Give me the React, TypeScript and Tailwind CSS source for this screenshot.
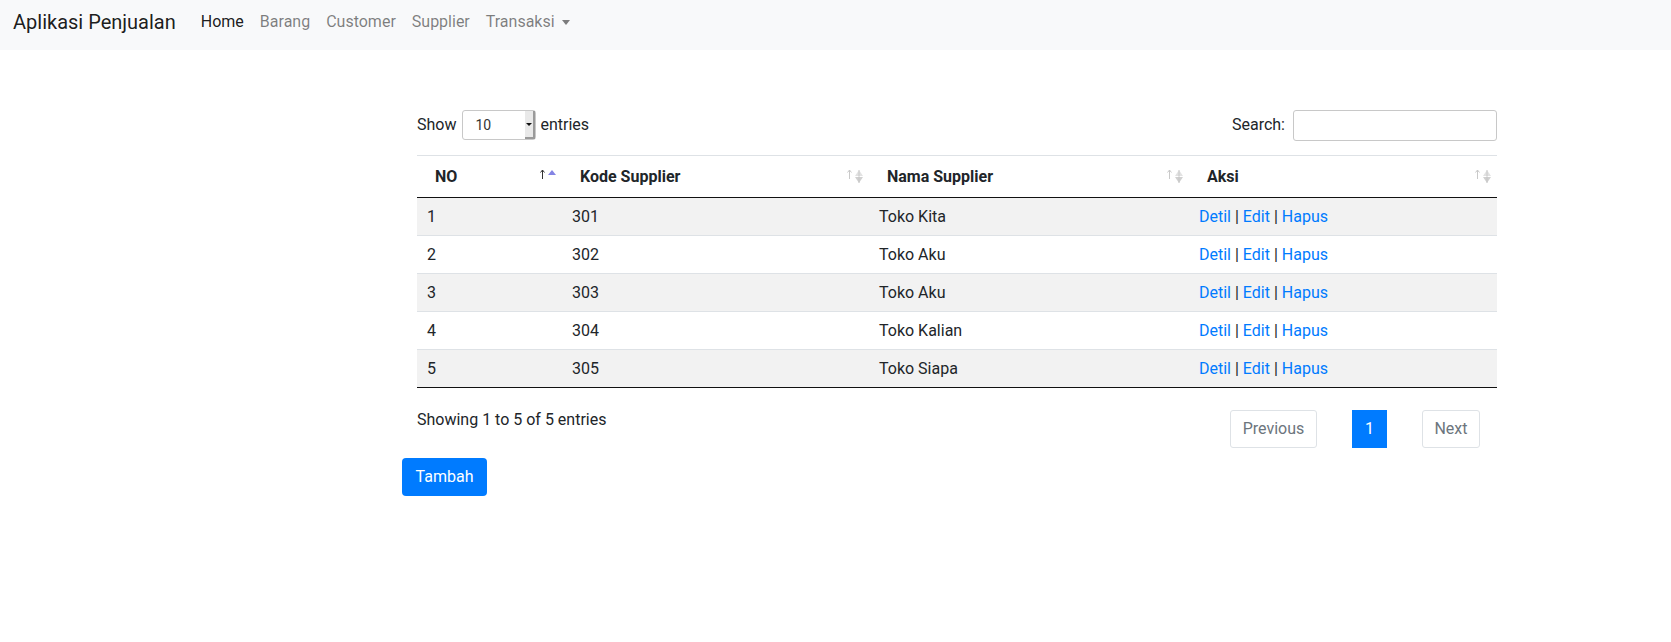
import React from 'react';

const suppliers = [
  { no: 1, kode: '301', nama: 'Toko Kita' },
  { no: 2, kode: '302', nama: 'Toko Aku' },
  { no: 3, kode: '303', nama: 'Toko Aku' },
  { no: 4, kode: '304', nama: 'Toko Kalian' },
  { no: 5, kode: '305', nama: 'Toko Siapa' },
];

function SortIcon({ active }: { active?: boolean }) {
  const arrow = active ? '#333333' : '#c9c9c9';
  return (
    <span className="absolute right-[5px] top-[13px] flex items-start gap-[2px]">
      <svg width="5" height="11" viewBox="0 0 5 11">
        <path d="M2.5 1 L2.5 10" stroke={arrow} strokeWidth="1" />
        <path d="M0.5 3.5 L2.5 1 L4.5 3.5" stroke={arrow} strokeWidth="1" fill="none" />
      </svg>
      {active ? (
        <svg width="10" height="14" viewBox="0 0 10 14">
          <path d="M1 6 L5 1 L9 6 Z" fill="#8484e4" />
        </svg>
      ) : (
        <svg width="10" height="15" viewBox="0 0 10 15">
          <path d="M1 7 L5 1 L9 7 Z" fill="#e2e2e2" />
          <path d="M1 8 L5 14 L9 8 Z" fill="#d0d0d0" />
          <path d="M5 1 L5 14" stroke="#c4c4c4" strokeWidth="0.8" />
        </svg>
      )}
    </span>
  );
}

function Navbar() {
  return (
    <nav className="flex h-[50px] items-start bg-[#f8f9fa] px-[13px] pt-[7px]">
      <span className="mr-[17px] text-[20px] leading-[30px] text-[rgba(0,0,0,0.9)]">Aplikasi Penjualan</span>
      <ul className="mt-[3px] flex items-center text-[16px] leading-6">
        <li className="px-[8px] text-[rgba(0,0,0,0.9)]">Home</li>
        <li className="px-[8px] text-[rgba(0,0,0,0.5)]">Barang</li>
        <li className="px-[8px] text-[rgba(0,0,0,0.5)]">Customer</li>
        <li className="px-[8px] text-[rgba(0,0,0,0.5)]">Supplier</li>
        <li className="flex items-center px-[8px] text-[rgba(0,0,0,0.5)]">
          Transaksi
          <span className="ml-[7px] mt-[1px] h-0 w-0 border-x-[4px] border-t-[5px] border-x-transparent border-t-[rgba(0,0,0,0.5)]" />
        </li>
      </ul>
    </nav>
  );
}

export default function App() {
  const headers = [
    { label: 'NO', w: 'w-[145px]', active: true },
    { label: 'Kode Supplier', w: 'w-[307px]' },
    { label: 'Nama Supplier', w: 'w-[320px]' },
    { label: 'Aksi', w: 'w-[308px]' },
  ];

  return (
    <div className="min-h-screen bg-white font-[Roboto,sans-serif] text-[16px] text-[#212529]">
      <Navbar />

      <div className="ml-[402px] w-[1110px] pt-[60px]">
        <div className="px-[15px]">
          <div className="flex h-[30px] items-center justify-between">
            <div className="flex items-center">
              <span>Show</span>
              <div className="ml-[6px] mr-[4px] flex h-[30px] w-[74px] items-stretch rounded-[3px] border border-[#c8c8c8] bg-white">
                <span className="flex-1 pl-[12px] text-[14px] leading-[28px] text-[#333]">10</span>
                <span className="relative flex w-[10px] items-center justify-center border-r-[2px] border-b-[2px] border-[#9a9a9a] bg-[#e9e9e9]">
                  <span className="h-0 w-0 border-x-[3px] border-t-[3px] border-x-transparent border-t-[#111]" />
                </span>
              </div>
              <span>entries</span>
            </div>
            <div className="flex items-center">
              <span className="mr-[8px]">Search:</span>
              <div className="h-[31px] w-[204px] rounded-[3px] border border-[#c8c8c8] bg-white" />
            </div>
          </div>

          <table className="mt-[15px] w-[1080px] table-fixed border-collapse">
            <thead>
              <tr>
                {headers.map((h) => (
                  <th
                    key={h.label}
                    className={`${h.w} relative border-t border-b border-t-[#dee2e6] border-b-[#111] pl-[18px] pr-[18px] pt-[9px] pb-[8px] text-left font-bold leading-6`}
                  >
                    {h.label}
                    <SortIcon active={h.active} />
                  </th>
                ))}
              </tr>
            </thead>
            <tbody>
              {suppliers.map((s, i) => {
                const last = i === suppliers.length - 1 ? 'border-b border-b-[#111]' : '';
                return (
                  <tr key={s.no} className={i % 2 === 0 ? 'bg-[#f2f2f2]' : 'bg-white'}>
                    {[String(s.no), s.kode, s.nama].map((v, j) => (
                      <td key={j} className={`border-t border-[#dee2e6] px-[10px] py-[6px] leading-[25px] ${last}`}>
                        {v}
                      </td>
                    ))}
                    <td className={`border-t border-[#dee2e6] px-[10px] py-[6px] leading-[25px] ${last}`}>
                      <a className="text-[#007bff]">Detil</a> | <a className="text-[#007bff]">Edit</a> |{' '}
                      <a className="text-[#007bff]">Hapus</a>
                    </td>
                  </tr>
                );
              })}
            </tbody>
          </table>

          <div className="mt-[20px] flex items-start justify-between">
            <div className="leading-6">Showing 1 to 5 of 5 entries</div>
            <div className="mr-[17px] mt-[2px] flex items-center gap-[35px] leading-6">
              <span className="flex h-[38px] w-[87px] items-center justify-center rounded-[3px] border border-[#dee2e6] text-[#6c757d]">
                Previous
              </span>
              <span className="flex h-[38px] w-[35px] items-center justify-center bg-[#007bff] text-white">1</span>
              <span className="flex h-[38px] w-[58px] items-center justify-center rounded-[3px] border border-[#dee2e6] text-[#6c757d]">
                Next
              </span>
            </div>
          </div>
        </div>

        <button className="mt-[10px] h-[38px] w-[85px] rounded-[4px] bg-[#007bff] leading-6 text-white">Tambah</button>
      </div>
    </div>
  );
}
